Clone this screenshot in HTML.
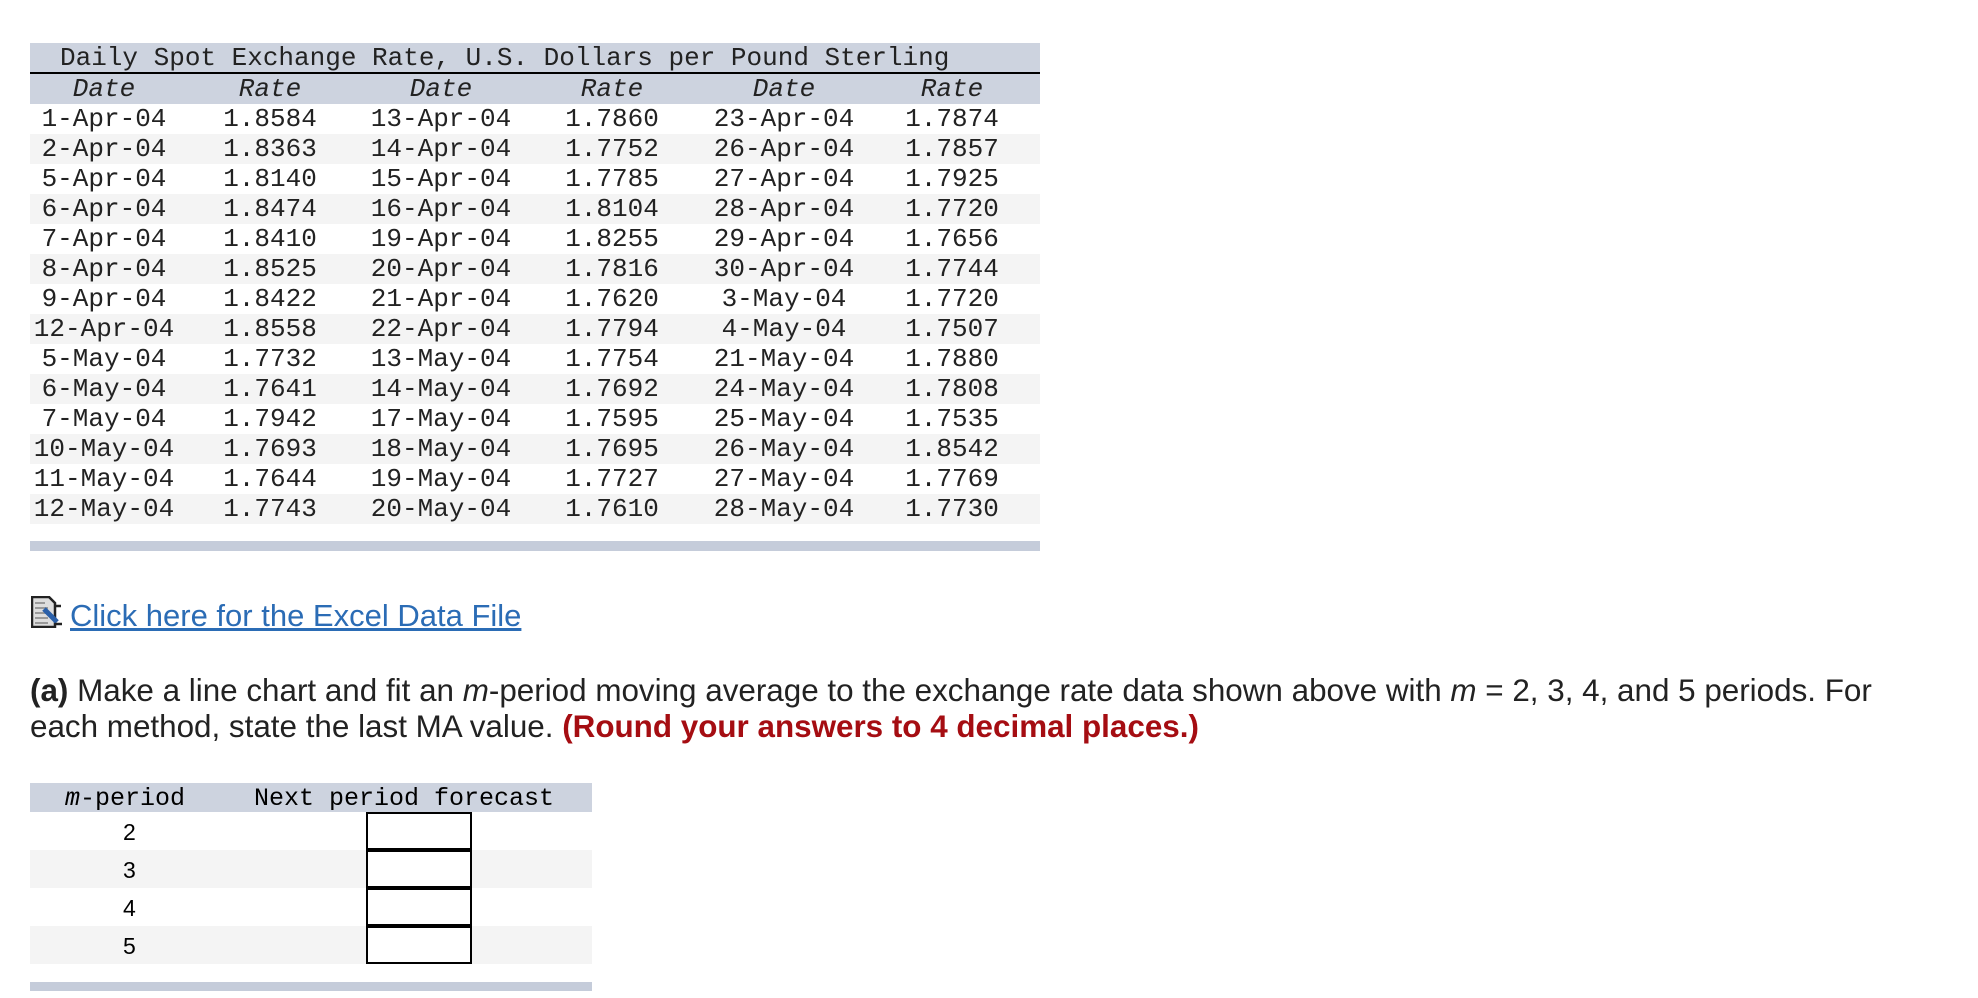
<!DOCTYPE html>
<html><head><meta charset="utf-8"><style>
body{margin:0;width:1978px;height:998px;background:#fff;position:relative;overflow:hidden;font-family:"Liberation Sans",sans-serif;}
.t{position:absolute;left:30px;top:43px;width:1010px;font-family:"Liberation Mono",monospace;font-size:26px;color:#222;}
.title{height:29px;background:#cdd3df;border-bottom:2px solid #000;line-height:30px;padding-left:30px;white-space:nowrap;}
.row{height:30px;display:flex;line-height:30px;}
.row div{text-align:center;}
.hd{background:#cdd3df;font-style:italic;}
.g{background:#f4f4f4;}
.c1{width:148px}.c2{width:184px}.c3{width:158px}.c4{width:184px}.c5{width:160px}.c6{width:176px}
.bar{position:absolute;background:#c5ccda;}
.link{position:absolute;left:70px;top:598px;font-size:31px;color:#2b6cb5;text-decoration:underline;white-space:nowrap;}
.p{position:absolute;left:30px;top:673px;font-size:31.4px;line-height:36px;color:#222;white-space:nowrap;}
.red{color:#a50d12;font-weight:bold;}
.s{position:absolute;left:30px;top:783px;width:562px;}
.sh{height:29px;background:#cdd3df;font-family:"Liberation Mono",monospace;font-size:25px;line-height:32px;position:relative;}
.sr{height:38px;position:relative;font-size:23px;line-height:40px;}
.box{position:absolute;left:336px;top:0;width:102px;height:34px;border:2px solid #000;background:#fff;}
</style></head><body>
<div class="t">
<div class="title">Daily Spot Exchange Rate, U.S. Dollars per Pound Sterling</div>
<div class="row hd"><div class="c1">Date</div><div class="c2">Rate</div><div class="c3">Date</div><div class="c4">Rate</div><div class="c5">Date</div><div class="c6">Rate</div></div>
<div class="row"><div class="c1">1-Apr-04</div><div class="c2">1.8584</div><div class="c3">13-Apr-04</div><div class="c4">1.7860</div><div class="c5">23-Apr-04</div><div class="c6">1.7874</div></div>
<div class="row g"><div class="c1">2-Apr-04</div><div class="c2">1.8363</div><div class="c3">14-Apr-04</div><div class="c4">1.7752</div><div class="c5">26-Apr-04</div><div class="c6">1.7857</div></div>
<div class="row"><div class="c1">5-Apr-04</div><div class="c2">1.8140</div><div class="c3">15-Apr-04</div><div class="c4">1.7785</div><div class="c5">27-Apr-04</div><div class="c6">1.7925</div></div>
<div class="row g"><div class="c1">6-Apr-04</div><div class="c2">1.8474</div><div class="c3">16-Apr-04</div><div class="c4">1.8104</div><div class="c5">28-Apr-04</div><div class="c6">1.7720</div></div>
<div class="row"><div class="c1">7-Apr-04</div><div class="c2">1.8410</div><div class="c3">19-Apr-04</div><div class="c4">1.8255</div><div class="c5">29-Apr-04</div><div class="c6">1.7656</div></div>
<div class="row g"><div class="c1">8-Apr-04</div><div class="c2">1.8525</div><div class="c3">20-Apr-04</div><div class="c4">1.7816</div><div class="c5">30-Apr-04</div><div class="c6">1.7744</div></div>
<div class="row"><div class="c1">9-Apr-04</div><div class="c2">1.8422</div><div class="c3">21-Apr-04</div><div class="c4">1.7620</div><div class="c5">3-May-04</div><div class="c6">1.7720</div></div>
<div class="row g"><div class="c1">12-Apr-04</div><div class="c2">1.8558</div><div class="c3">22-Apr-04</div><div class="c4">1.7794</div><div class="c5">4-May-04</div><div class="c6">1.7507</div></div>
<div class="row"><div class="c1">5-May-04</div><div class="c2">1.7732</div><div class="c3">13-May-04</div><div class="c4">1.7754</div><div class="c5">21-May-04</div><div class="c6">1.7880</div></div>
<div class="row g"><div class="c1">6-May-04</div><div class="c2">1.7641</div><div class="c3">14-May-04</div><div class="c4">1.7692</div><div class="c5">24-May-04</div><div class="c6">1.7808</div></div>
<div class="row"><div class="c1">7-May-04</div><div class="c2">1.7942</div><div class="c3">17-May-04</div><div class="c4">1.7595</div><div class="c5">25-May-04</div><div class="c6">1.7535</div></div>
<div class="row g"><div class="c1">10-May-04</div><div class="c2">1.7693</div><div class="c3">18-May-04</div><div class="c4">1.7695</div><div class="c5">26-May-04</div><div class="c6">1.8542</div></div>
<div class="row"><div class="c1">11-May-04</div><div class="c2">1.7644</div><div class="c3">19-May-04</div><div class="c4">1.7727</div><div class="c5">27-May-04</div><div class="c6">1.7769</div></div>
<div class="row g"><div class="c1">12-May-04</div><div class="c2">1.7743</div><div class="c3">20-May-04</div><div class="c4">1.7610</div><div class="c5">28-May-04</div><div class="c6">1.7730</div></div>
</div>
<div class="bar" style="left:30px;top:541px;width:1010px;height:10px"></div>

<svg style="position:absolute;left:31px;top:596px" width="32" height="32" viewBox="0 0 32 32">
<path d="M1 1h17l6 6v24H1z" fill="#ddd" stroke="#222" stroke-width="2.5"/>
<path d="M4 7h10M4 12h13M4 17h13M4 22h13M4 27h13" stroke="#999" stroke-width="2"/>
<path d="M13 13l13 13" stroke="#2a5fa8" stroke-width="5"/>
<path d="M24 10l6 0M24 28h7" stroke="#222" stroke-width="2.5"/>
</svg>
<div class="link">Click here for the Excel Data File</div>

<div class="p"><b>(a)</b> Make a line chart and fit an <i>m</i>-period moving average to the exchange rate data shown above with <i>m</i> = 2, 3, 4, and 5 periods. For<br>each method, state the last MA value. <span class="red">(Round your answers to 4 decimal places.)</span></div>

<div class="s">
<div class="sh"><span style="position:absolute;left:35px"><i>m</i>-period</span><span style="position:absolute;left:224px">Next period forecast</span></div>
<div class="sr"><span style="position:absolute;left:93px">2</span><div class="box"></div></div>
<div class="sr g"><span style="position:absolute;left:93px">3</span><div class="box"></div></div>
<div class="sr"><span style="position:absolute;left:93px">4</span><div class="box"></div></div>
<div class="sr g"><span style="position:absolute;left:93px">5</span><div class="box"></div></div>
</div>
<div class="bar" style="left:30px;top:982px;width:562px;height:9px"></div>
</body></html>
